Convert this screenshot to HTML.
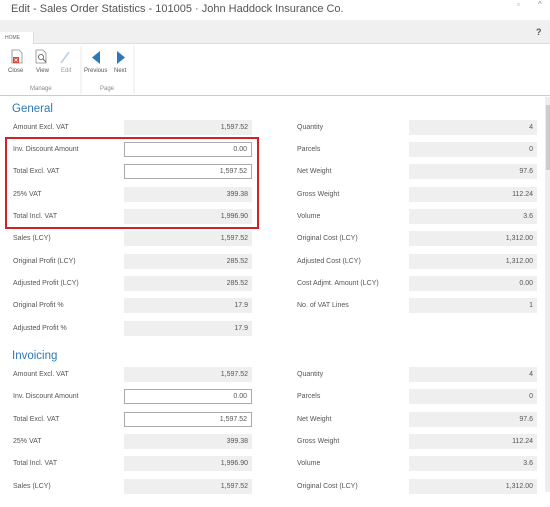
<!DOCTYPE html><html><head><meta charset="utf-8"><style>
body{margin:0;width:550px;height:507px;overflow:hidden;background:#fff;font-family:"Liberation Sans",sans-serif;position:relative;color:#444}
.a{position:absolute}
.l{position:absolute;font-size:7px;color:#555}
.b{position:absolute;width:128px;height:15px;background:#efefef;font-size:7px;color:#555;text-align:right;line-height:15px;box-sizing:border-box;padding-right:4px}
.w{background:#fff;border:1px solid #aaa;line-height:13px}
.h{position:absolute;font-size:11.5px;color:#2e78b8}
.ic{position:absolute;font-size:6px;color:#555;text-align:center}
</style></head><body>
<div class="a" style="left:11px;top:3px;font-size:11px;color:#555">Edit - Sales Order Statistics - 101005 · John Haddock Insurance Co.</div>
<div class="a" style="left:517px;top:0px;font-size:8px;color:#888">▫</div>
<div class="a" style="left:538px;top:0px;font-size:8px;color:#888">^</div>
<div class="a" style="left:0;top:20px;width:550px;height:23px;background:#f0f0f0;border-bottom:1px solid #ddd"></div>
<div class="a" style="left:0;top:32px;width:34px;height:12px;background:#fff;border-right:1px solid #ddd;font-size:5px;color:#666;line-height:12px;padding-left:5px;box-sizing:border-box">HOME</div>
<div class="a" style="left:536px;top:27px;font-size:9px;font-weight:bold;color:#555">?</div>
<svg class="a" style="left:0;top:44px" width="140" height="52">
<path d="M12 6h7l3 3v10h-10z" fill="#fff" stroke="#888" stroke-width=".8"/><rect x="13" y="13" width="6" height="6" fill="#d9463a"/><path d="M14.5 14.5l3 3M17.5 14.5l-3 3" stroke="#fff" stroke-width=".8"/>
<path d="M36 6h7l3 3v10h-10z" fill="#fff" stroke="#888" stroke-width=".8"/><circle cx="41" cy="13" r="2.6" fill="none" stroke="#666" stroke-width=".9"/><path d="M43 15l3 3" stroke="#666"/>
<path d="M61 19l8-11" stroke="#b8cde0" stroke-width="1.5"/>
<path d="M100 7v13l-8-6.5z" fill="#2e78b8"/><path d="M117 7v13l8-6.5z" fill="#2e78b8"/>
<line x1="81" y1="2" x2="81" y2="50" stroke="#e8e8e8"/><line x1="134" y1="2" x2="134" y2="50" stroke="#e8e8e8"/>
</svg>
<div class="ic" style="left:8px;top:68px">Close</div><div class="ic" style="left:36px;top:68px">View</div><div class="ic" style="left:61px;top:68px;color:#999">Edit</div>
<div class="ic" style="left:84px;top:68px">Previous</div><div class="ic" style="left:114px;top:68px">Next</div>
<div class="ic" style="left:30px;top:86px;color:#888">Manage</div><div class="ic" style="left:100px;top:86px;color:#888">Page</div>
<div class="a" style="left:0;top:95px;width:550px;height:1px;background:#ccc"></div>
<div class="a" style="left:545px;top:97px;width:5px;height:395px;background:#eee"></div>
<div class="a" style="left:546px;top:105px;width:4px;height:65px;background:#ccc"></div>
<div class="h" style="left:12px;top:103px">General</div>
<div class="h" style="left:12px;top:350px">Invoicing</div>
<div class="a" style="left:5px;top:137px;width:250px;height:88px;border:2px solid #d0202a"></div>

<div class="l" style="left:13px;top:124px">Amount Excl. VAT</div><div class="b" style="left:124px;top:120px">1,597.52</div>
<div class="l" style="left:13px;top:146px">Inv. Discount Amount</div><div class="b w" style="left:124px;top:142px">0.00</div>
<div class="l" style="left:13px;top:168px">Total Excl. VAT</div><div class="b w" style="left:124px;top:164px">1,597.52</div>
<div class="l" style="left:13px;top:191px">25% VAT</div><div class="b" style="left:124px;top:187px">399.38</div>
<div class="l" style="left:13px;top:213px">Total Incl. VAT</div><div class="b" style="left:124px;top:209px">1,996.90</div>
<div class="l" style="left:13px;top:235px">Sales (LCY)</div><div class="b" style="left:124px;top:231px">1,597.52</div>
<div class="l" style="left:13px;top:258px">Original Profit (LCY)</div><div class="b" style="left:124px;top:254px">285.52</div>
<div class="l" style="left:13px;top:280px">Adjusted Profit (LCY)</div><div class="b" style="left:124px;top:276px">285.52</div>
<div class="l" style="left:13px;top:302px">Original Profit %</div><div class="b" style="left:124px;top:298px">17.9</div>
<div class="l" style="left:13px;top:325px">Adjusted Profit %</div><div class="b" style="left:124px;top:321px">17.9</div>

<div class="l" style="left:297px;top:124px">Quantity</div><div class="b" style="left:409px;top:120px">4</div>
<div class="l" style="left:297px;top:146px">Parcels</div><div class="b" style="left:409px;top:142px">0</div>
<div class="l" style="left:297px;top:168px">Net Weight</div><div class="b" style="left:409px;top:164px">97.6</div>
<div class="l" style="left:297px;top:191px">Gross Weight</div><div class="b" style="left:409px;top:187px">112.24</div>
<div class="l" style="left:297px;top:213px">Volume</div><div class="b" style="left:409px;top:209px">3.6</div>
<div class="l" style="left:297px;top:235px">Original Cost (LCY)</div><div class="b" style="left:409px;top:231px">1,312.00</div>
<div class="l" style="left:297px;top:258px">Adjusted Cost (LCY)</div><div class="b" style="left:409px;top:254px">1,312.00</div>
<div class="l" style="left:297px;top:280px">Cost Adjmt. Amount (LCY)</div><div class="b" style="left:409px;top:276px">0.00</div>
<div class="l" style="left:297px;top:302px">No. of VAT Lines</div><div class="b" style="left:409px;top:298px">1</div>

<div class="l" style="left:13px;top:371px">Amount Excl. VAT</div><div class="b" style="left:124px;top:367px">1,597.52</div>
<div class="l" style="left:13px;top:393px">Inv. Discount Amount</div><div class="b w" style="left:124px;top:389px">0.00</div>
<div class="l" style="left:13px;top:416px">Total Excl. VAT</div><div class="b w" style="left:124px;top:412px">1,597.52</div>
<div class="l" style="left:13px;top:438px">25% VAT</div><div class="b" style="left:124px;top:434px">399.38</div>
<div class="l" style="left:13px;top:460px">Total Incl. VAT</div><div class="b" style="left:124px;top:456px">1,996.90</div>
<div class="l" style="left:13px;top:483px">Sales (LCY)</div><div class="b" style="left:124px;top:479px">1,597.52</div>

<div class="l" style="left:297px;top:371px">Quantity</div><div class="b" style="left:409px;top:367px">4</div>
<div class="l" style="left:297px;top:393px">Parcels</div><div class="b" style="left:409px;top:389px">0</div>
<div class="l" style="left:297px;top:416px">Net Weight</div><div class="b" style="left:409px;top:412px">97.6</div>
<div class="l" style="left:297px;top:438px">Gross Weight</div><div class="b" style="left:409px;top:434px">112.24</div>
<div class="l" style="left:297px;top:460px">Volume</div><div class="b" style="left:409px;top:456px">3.6</div>
<div class="l" style="left:297px;top:483px">Original Cost (LCY)</div><div class="b" style="left:409px;top:479px">1,312.00</div>
</body></html>
